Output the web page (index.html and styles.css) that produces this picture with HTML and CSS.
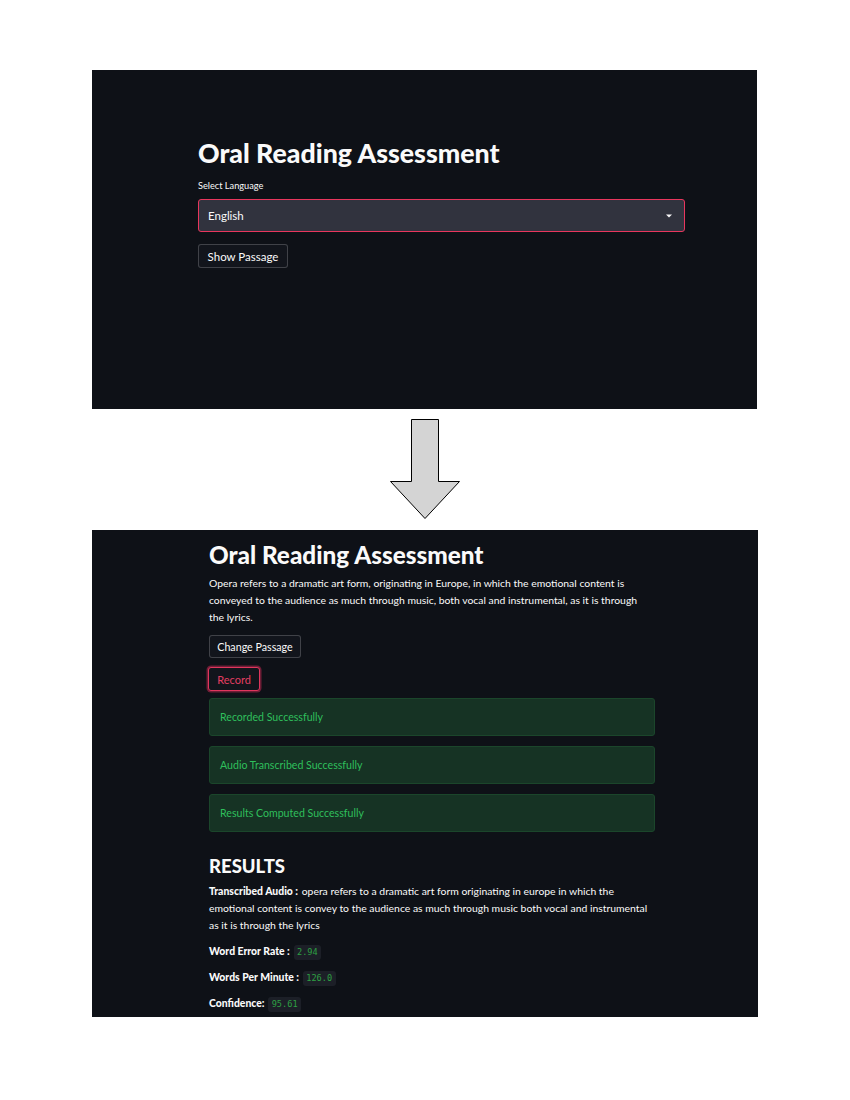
FILE: index.html
```html
<!DOCTYPE html>
<html>
<head>
<meta charset="utf-8">
<link rel="stylesheet" href="styles.css">
</head>
<body>
<div class="page">
  <section class="shot shot-one">
    <div class="content-one">
      <h1 class="title-one">Oral Reading Assessment</h1>
      <div class="label">Select Language</div>
      <div class="select">
        <span>English</span>
        <svg class="caret" width="6" height="4" viewBox="0 0 6 4"><path d="M0 0.5 H6 L3 3.5 Z" fill="#fafafa"/></svg>
      </div>
      <button class="btn btn-one">Show Passage</button>
    </div>
  </section>

  <div class="arrow-row">
    <svg width="72" height="102" viewBox="0 0 72 102">
      <polygon points="22.5,0.5 49.5,0.5 49.5,62.5 70.5,62.5 36,99.5 1.5,62.5 22.5,62.5" fill="#d4d4d4" stroke="#000" stroke-width="1"/>
    </svg>
  </div>

  <section class="shot shot-two">
    <div class="content-two">
      <h1 class="title-two">Oral Reading Assessment</h1>
      <p class="para passage">Opera refers to a dramatic art form, originating in Europe, in which the emotional content is conveyed to the audience as much through music, both vocal and instrumental, as it is through the lyrics.</p>
      <button class="btn btn-two">Change Passage</button>
      <button class="btn btn-record">Record</button>
      <div class="alerts">
        <div class="success">Recorded Successfully</div>
        <div class="success">Audio Transcribed Successfully</div>
        <div class="success">Results Computed Successfully</div>
      </div>
      <h2 class="results">RESULTS</h2>
      <p class="para transcript"><b>Transcribed Audio :</b> opera refers to a dramatic art form originating in europe in which the emotional content is convey to the audience as much through music both vocal and instrumental as it is through the lyrics</p>
      <p class="metric"><b>Word Error Rate :</b> <code>2.94</code></p>
      <p class="metric"><b>Words Per Minute :</b> <code>126.0</code></p>
      <p class="metric"><b>Confidence:</b> <code>95.61</code></p>
    </div>
  </section>
</div>
</body>
</html>
```
FILE: styles.css
```css
* { box-sizing: border-box; }
html, body { margin: 0; padding: 0; background: #ffffff; }
body { font-family: "Lato", "Noto Sans", sans-serif; }

.page {
  width: 850px;
  height: 1100px;
  padding-top: 70px;
  display: flex;
  flex-direction: column;
  align-items: flex-start;
}

.shot {
  background: #0e1117;
  color: #fafafa;
  margin-left: 92px;
}

.shot-one {
  width: 665px;
  height: 339px;
  padding: 0 0 0 106px;
}

.content-one { width: 487px; padding-top: 68px; }

.title-one {
  margin: 0;
  font-size: 26.7px;
  font-weight: 900;
  line-height: 30px;
}

.label {
  font-size: 9.2px;
  margin-top: 12px;
  line-height: 12px;
}

.select {
  margin-top: 7px;
  height: 33px;
  background: #31333e;
  border: 1px solid #e8365d;
  border-radius: 3px;
  display: flex;
  align-items: center;
  justify-content: space-between;
  padding: 0 12px 0 9px;
  font-size: 11.5px;
}
.caret { display: block; }

.btn {
  display: block;
  font-family: inherit;
  background: #12151c;
  color: #fafafa;
  border: 1px solid rgba(250, 250, 250, 0.2);
  border-radius: 3px;
  padding: 0;
  cursor: pointer;
}

.btn-one {
  margin-top: 12px;
  width: 90px;
  height: 24px;
  font-size: 11.5px;
}

.arrow-row {
  width: 850px;
  height: 121px;
  display: flex;
  justify-content: center;
  padding-top: 10px;
}
.arrow-row svg { margin-left: -1px; }

.shot-two {
  width: 666px;
  height: 487px;
  padding-left: 117px;
  overflow: hidden;
}

.content-two { width: 446px; padding-top: 11px; }

.title-two {
  margin: 0;
  font-size: 24.3px;
  font-weight: 900;
  line-height: 28px;
}

.para {
  margin: 6px 0 0;
  font-size: 10.4px;
  line-height: 17px;
  color: #fafafa;
}

.passage { max-width: 441px; }

.btn-two {
  margin-top: 9px;
  width: 92px;
  height: 23px;
  font-size: 10.7px;
}

.btn-record {
  margin-top: 9px;
  margin-left: -1px;
  width: 52px;
  height: 24px;
  font-size: 11px;
  color: #e33d61;
  border: 1px solid #e0365d;
  box-shadow: 0 0 0 1.5px rgba(190, 40, 80, 0.55);
}

.alerts {
  margin-top: 7px;
  display: flex;
  flex-direction: column;
  gap: 10px;
}

.success {
  height: 38px;
  background: #163324;
  border: 1px solid #1b462b;
  border-radius: 3px;
  display: flex;
  align-items: center;
  padding-left: 10px;
  font-size: 10.6px;
  color: #2fbf5c;
}

.results {
  margin: 22px 0 0;
  font-size: 18.5px;
  font-weight: 900;
  line-height: 24px;
}

.transcript { margin-top: 5px; }

.metric {
  margin: 9px 0 0;
  font-size: 10.4px;
  line-height: 17px;
}

.metric b, .transcript b { font-weight: 900; margin-right: 1px; }

code {
  font-family: "DejaVu Sans Mono", monospace;
  font-size: 8.6px;
  line-height: 1;
  color: #2ea043;
  background: #1c1f27;
  border-radius: 3px;
  padding: 3px 3.5px;
  display: inline-block;
}
```
